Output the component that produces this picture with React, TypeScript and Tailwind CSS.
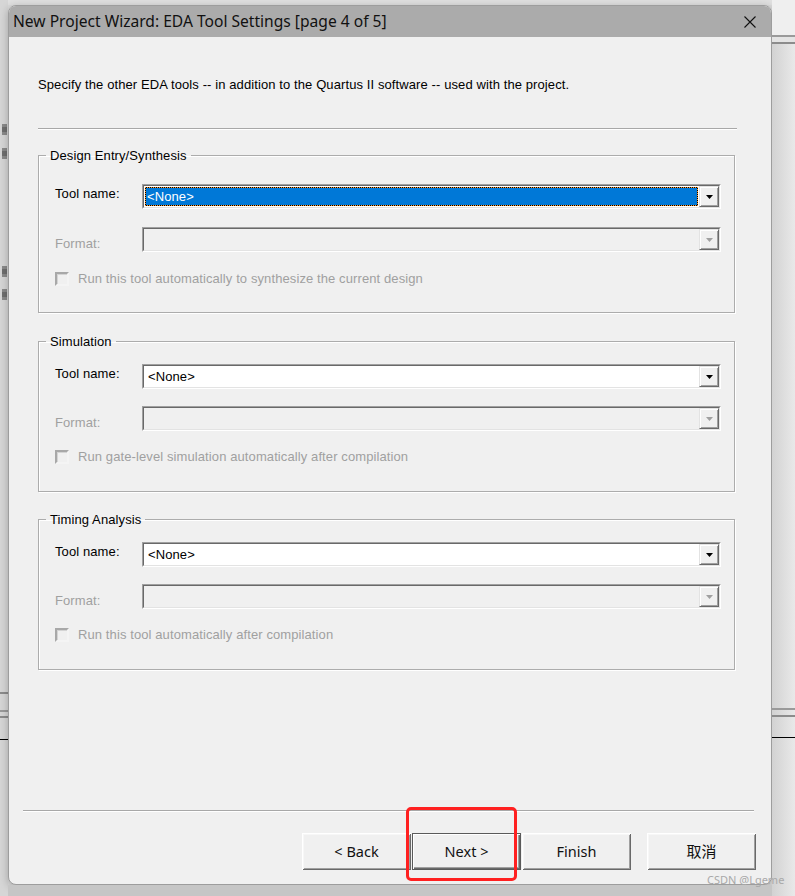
import React from "react";

const SANS = "[font-family:'Liberation_Sans',Arial,sans-serif]";

function Arrow({ disabled }: { disabled?: boolean }) {
  return (
    <svg width="7" height="4" viewBox="0 0 7 4">
      <polygon points="0,0 7,0 3.5,4" fill={disabled ? "#a0a0a0" : "#000"} />
    </svg>
  );
}

function DropButton({ disabled }: { disabled?: boolean }) {
  return (
    <div className="w-[20px] h-full flex items-center justify-center bg-[#f0f0f0] border border-[#e3e3e3] border-r-[#696969] border-b-[#696969] shadow-[inset_1px_1px_0_#fff,inset_-1px_-1px_0_#a0a0a0]">
      <Arrow disabled={disabled} />
    </div>
  );
}

function Combo({ value, selected, disabled }: { value?: string; selected?: boolean; disabled?: boolean }) {
  return (
    <div className="flex-1 h-[25px] border border-[#a0a0a0] border-r-white border-b-white">
      <div
        className={
          "h-full flex border border-[#696969] border-r-[#e3e3e3] border-b-[#e3e3e3] " +
          (disabled ? "bg-[#f0f0f0]" : "bg-white")
        }
      >
        <div className="flex-1 flex p-[1px]">
          {selected ? (
            <div className="flex-1 bg-black">
              <div className="h-full flex items-center pl-[1px] border border-dotted border-[#ff9a2e] bg-[#0078d7] bg-clip-padding text-white">
                {value}
              </div>
            </div>
          ) : (
            <div className="flex items-center pl-[3px] text-black">{value}</div>
          )}
        </div>
        <DropButton disabled={disabled} />
      </div>
    </div>
  );
}

function Checkbox() {
  return (
    <div className="w-[14px] h-[14px] bg-[#f0f0f0] border-2 border-[#a8a8a8] border-r-[#f4f4f4] border-b-[#f4f4f4] shadow-[inset_1px_1px_0_#d4d4d4]" />
  );
}

interface GroupProps {
  title: string;
  check: string;
  selected?: boolean;
  outer: string;
  inner: string;
  formatGap: string;
  checkGap: string;
}

function Group({ title, check, selected, outer, inner, formatGap, checkGap }: GroupProps) {
  return (
    <fieldset
      className={
        "w-[697px] border border-[#acacac] px-[7px] shadow-[1px_1px_0_#fff,inset_1px_1px_0_#fff] " + outer
      }
    >
      <legend className="px-[4px] leading-[15px] text-black">{title}</legend>
      <div className={"pl-[9px] pr-[6px] flex flex-col " + inner}>
        <div className="flex items-start">
          <div className="w-[87px] mt-[2px] leading-[15px] text-black">Tool name:</div>
          <Combo value="<None>" selected={selected} />
        </div>
        <div className={"flex items-start " + formatGap}>
          <div className="w-[87px] mt-[9px] leading-[15px] text-[#a0a0a0]">Format:</div>
          <Combo disabled />
        </div>
        <div className={"flex items-center gap-[9px] h-[15px] " + checkGap}>
          <Checkbox />
          <span className="leading-[15px] text-[#a0a0a0]">{check}</span>
        </div>
      </div>
    </fieldset>
  );
}

function WinButton({ label, primary, cjk }: { label: string; primary?: boolean; cjk?: boolean }) {
  return (
    <div
      className={
        "w-[109px] h-[37px] flex items-center justify-center bg-[#f0f0f0] text-[#111] tracking-normal " +
        "[font-family:'Noto_Sans','Noto_Sans_CJK_SC',sans-serif] " +
        (cjk ? "text-[15px] " : "text-[14.5px] ") +
        (primary
          ? "border border-[#5a5a5a] shadow-[inset_1px_1px_0_#fff,inset_-1px_-1px_0_#696969,inset_-2px_-2px_0_#a0a0a0]"
          : "shadow-[inset_1px_1px_0_#fff,inset_-1px_-1px_0_#696969,inset_2px_2px_0_#f7f7f7,inset_-2px_-2px_0_#a0a0a0]")
      }
    >
      {label}
    </div>
  );
}

function SideMark() {
  return <div className="w-[5px] h-[11px] ml-[2px] bg-[#6e6e6e] border-y-[3px] border-[#8a8a8a]" />;
}

export default function App() {
  return (
    <div className={"relative w-[795px] h-[896px] overflow-hidden flex bg-[#dadada] text-[13px] tracking-[0.1px] " + SANS}>
      {/* desktop behind, left edge */}
      <div className="w-[8px] h-full flex flex-col bg-[#d6d6d6]">
        <div className="h-[124px]" />
        <SideMark />
        <div className="h-[13px]" />
        <SideMark />
        <div className="h-[107px]" />
        <SideMark />
        <div className="h-[12px]" />
        <SideMark />
        <div className="h-[392px]" />
        <div className="h-[2px] bg-[#8c8c8c]" />
        <div className="h-[16px]" />
        <div className="h-[2px] bg-[#9a9a9a]" />
        <div className="h-[4px]" />
        <div className="h-[2px] bg-[#8c8c8c]" />
        <div className="h-[21px]" />
        <div className="h-[1px] bg-black" />
      </div>

      <div className="w-[764px] flex flex-col">
        <div className="h-[5px] bg-[#e0e0e0]" />
        <div className="h-[880px] flex flex-col rounded-[8px] overflow-hidden border border-[#9d9d9d] bg-[#f0f0f0] shadow-[0_2px_8px_rgba(0,0,0,0.25)]">
          {/* title bar */}
          <div className="h-[31px] flex items-center justify-between pl-[4px] pr-[15px] bg-[#ababab]">
            <span className="text-[15.6px] tracking-normal text-[#111] [font-family:'Noto_Sans',sans-serif]">
              New Project Wizard: EDA Tool Settings [page 4 of 5]
            </span>
            <svg width="12" height="12" viewBox="0 0 12 12">
              <path d="M0.5 0.5 L11.5 11.5 M11.5 0.5 L0.5 11.5" stroke="#111" strokeWidth="1.1" />
            </svg>
          </div>

          {/* body */}
          <div className="flex-1 flex flex-col">
            <div className="pl-[29px] pr-[34px] pt-[40px] flex flex-col">
              <p className="leading-[15px] text-black">
                Specify the other EDA tools -- in addition to the Quartus II software -- used with the project.
              </p>
              <div className="mt-[36px] h-[2px] border-t border-[#a8a8a8] border-b border-b-white" />
              <Group
                title="Design Entry/Synthesis"
                check="Run this tool automatically to synthesize the current design"
                selected
                outer="mt-[18px]"
                inner="pt-[21px] pb-[26px]"
                formatGap="mt-[18px]"
                checkGap="mt-[19px]"
              />
              <Group
                title="Simulation"
                check="Run gate-level simulation automatically after compilation"
                outer="mt-[21px]"
                inner="pt-[15px] pb-[27px]"
                formatGap="mt-[17px]"
                checkGap="mt-[18px]"
              />
              <Group
                title="Timing Analysis"
                check="Run this tool automatically after compilation"
                outer="mt-[20px]"
                inner="pt-[15px] pb-[27px]"
                formatGap="mt-[17px]"
                checkGap="mt-[18px]"
              />
            </div>

            <div className="flex-1" />

            <div className="flex flex-col pb-[14px]">
              <div className="ml-[14px] mr-[17px] h-[2px] border-t border-[#a8a8a8] border-b border-b-white" />
              <div className="relative mt-[21px] flex justify-end pr-[15px]">
                <div className="flex gap-[1px]">
                  <WinButton label="< Back" />
                  <WinButton label="Next >" primary />
                  <WinButton label="Finish" />
                </div>
                <div className="ml-[16px]">
                  <WinButton label="取消" cjk />
                </div>
                {/* red annotation box */}
                <div className="absolute left-[397px] top-[-26px] w-[111px] h-[74px] border-[3px] border-[#ff2020] rounded-[5px]" />
              </div>
            </div>
          </div>
        </div>
        <div className="flex-1 bg-[#c6c6c6]" />
      </div>

      {/* desktop behind, right edge */}
      <div className="flex-1 h-full flex flex-col bg-gradient-to-r from-[#d2d2d2] to-[#e9e9e9]">
        <div className="h-[35px] bg-[#efefef]" />
        <div className="h-[2px] bg-[#9a9a9a]" />
        <div className="h-[5px] bg-[#e4e4e4]" />
        <div className="h-[2px] bg-[#8c8c8c]" />
        <div className="h-[664px]" />
        <div className="h-[2px] bg-[#9a9a9a]" />
        <div className="h-[5px]" />
        <div className="h-[2px] bg-[#8c8c8c]" />
        <div className="h-[20px]" />
        <div className="h-[1px] bg-black" />
      </div>

      <div className="absolute left-[707px] top-[873px] text-[11px] leading-[13px] tracking-normal text-[#a9a9a9] [font-family:'Noto_Sans',sans-serif]">
        CSDN @Lgeme
      </div>
    </div>
  );
}
